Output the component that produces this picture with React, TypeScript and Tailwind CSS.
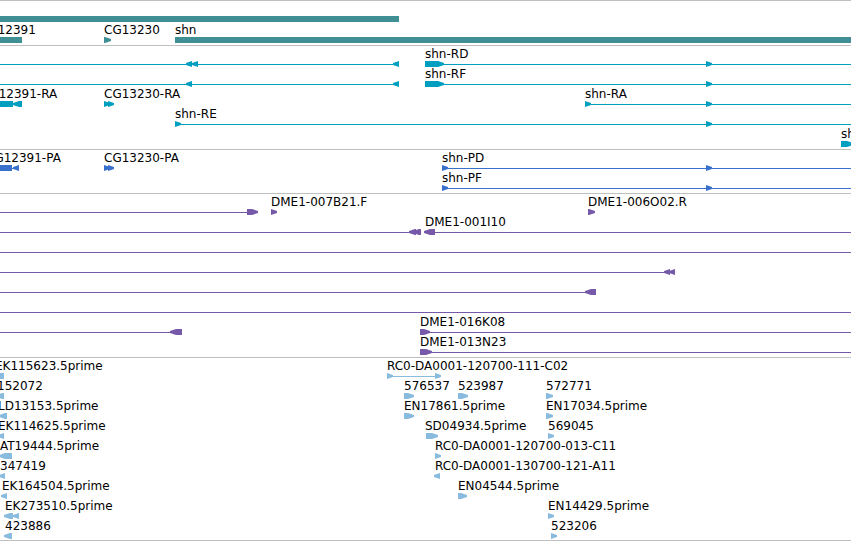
import React from 'react';

type Shape = 'line' | 'box' | 'right' | 'left';

// [shape, start, end], where a missing end runs on to the edge of the view
type Glyph = [Shape, number, number?];

interface Label {
  x: number;
  text: string;
}

interface Row {
  labels?: Label[];
  glyphs: Glyph[];
}

interface TrackData {
  name: string;
  color: string;
  rowHeight: string;
  padding: string;
  rows: Row[];
}

const GLYPH_HEIGHT = 6;
const TIP = 6;

const tracks: TrackData[] = [
  {
    name: 'Genes',
    color: 'text-[#3f8f94]',
    rowHeight: 'h-[21px]',
    padding: 'pt-0.5',
    rows: [
      { glyphs: [['box', -5, 399]] },
      {
        labels: [
          { x: -20, text: 'CG12391' },
          { x: 104, text: 'CG13230' },
          { x: 175, text: 'shn' },
        ],
        glyphs: [['box', -5, 22], ['right', 104, 111], ['box', 175]],
      },
    ],
  },
  {
    name: 'Transcripts',
    color: 'text-[#009fc0]',
    rowHeight: 'h-5',
    padding: 'pt-0.5 pb-px',
    rows: [
      {
        labels: [{ x: 425, text: 'shn-RD' }],
        glyphs: [
          ['line', 0, 399], ['left', 186, 192], ['left', 192, 198], ['left', 393, 399],
          ['line', 425], ['right', 425, 444], ['right', 706, 712],
        ],
      },
      {
        labels: [{ x: 425, text: 'shn-RF' }],
        glyphs: [
          ['line', 0, 399], ['left', 186, 192], ['left', 393, 399],
          ['line', 425], ['right', 425, 444], ['right', 706, 712],
        ],
      },
      {
        labels: [
          { x: -19, text: 'CG12391-RA' },
          { x: 104, text: 'CG13230-RA' },
          { x: 585, text: 'shn-RA' },
        ],
        glyphs: [
          ['box', -5, 13], ['left', 13, 22],
          ['right', 104, 110], ['right', 108, 114],
          ['line', 585], ['right', 585, 591], ['right', 706, 712],
        ],
      },
      {
        labels: [{ x: 175, text: 'shn-RE' }],
        glyphs: [['line', 175], ['right', 175, 181], ['right', 706, 712]],
      },
      {
        labels: [{ x: 841, text: 'shn-RB' }],
        glyphs: [['right', 841, 853]],
      },
    ],
  },
  {
    name: 'Proteins',
    color: 'text-[#3870cc]',
    rowHeight: 'h-5',
    padding: 'pt-0.5 pb-px',
    rows: [
      {
        labels: [
          { x: -14, text: 'CG12391-PA' },
          { x: 104, text: 'CG13230-PA' },
          { x: 442, text: 'shn-PD' },
        ],
        glyphs: [
          ['box', -5, 12], ['line', 12, 19], ['left', 13, 19],
          ['right', 104, 110], ['right', 108, 114],
          ['line', 442], ['right', 442, 448], ['right', 706, 712],
        ],
      },
      {
        labels: [{ x: 442, text: 'shn-PF' }],
        glyphs: [['line', 442], ['right', 442, 448], ['right', 706, 712]],
      },
    ],
  },
  {
    name: 'Clones',
    color: 'text-[#7659a8]',
    rowHeight: 'h-5',
    padding: 'pt-0.5 pb-px',
    rows: [
      {
        labels: [
          { x: 271, text: 'DME1-007B21.F' },
          { x: 588, text: 'DME1-006O02.R' },
        ],
        glyphs: [['line', 0, 257], ['right', 247, 258], ['right', 271, 277], ['right', 588, 595]],
      },
      {
        labels: [{ x: 425, text: 'DME1-001I10' }],
        glyphs: [['line', 0, 421], ['left', 409, 416], ['left', 413, 421], ['line', 425], ['left', 424, 435]],
      },
      { glyphs: [['line', 0]] },
      { glyphs: [['line', 0, 675], ['left', 664, 670], ['left', 669, 675]] },
      { glyphs: [['line', 0, 596], ['left', 585, 596]] },
      { glyphs: [['line', 0]] },
      {
        labels: [{ x: 420, text: 'DME1-016K08' }],
        glyphs: [['line', 0, 182], ['left', 170, 182], ['line', 420], ['right', 420, 430]],
      },
      {
        labels: [{ x: 420, text: 'DME1-013N23' }],
        glyphs: [['line', 420], ['right', 420, 432]],
      },
    ],
  },
  {
    name: 'ESTs',
    color: 'text-[#88bbdd]',
    rowHeight: 'h-5',
    padding: 'pt-0.5',
    rows: [
      {
        labels: [
          { x: -5, text: 'EK115623.5prime' },
          { x: 387, text: 'RC0-DA0001-120700-111-C02' },
        ],
        glyphs: [['box', -5, 4], ['line', 387, 440], ['right', 387, 393], ['right', 435, 441]],
      },
      {
        labels: [
          { x: -3, text: '152072' },
          { x: 404, text: '576537' },
          { x: 458, text: '523987' },
          { x: 546, text: '572771' },
        ],
        glyphs: [['left', -4, 4], ['right', 404, 414], ['right', 458, 468], ['right', 546, 553]],
      },
      {
        labels: [
          { x: -2, text: 'LD13153.5prime' },
          { x: 404, text: 'EN17861.5prime' },
          { x: 546, text: 'EN17034.5prime' },
        ],
        glyphs: [['left', -1, 7], ['right', 404, 414], ['right', 546, 553]],
      },
      {
        labels: [
          { x: -2, text: 'EK114625.5prime' },
          { x: 425, text: 'SD04934.5prime' },
          { x: 548, text: '569045' },
        ],
        glyphs: [['left', -2, 4], ['right', 426, 438], ['right', 548, 554]],
      },
      {
        labels: [
          { x: 0, text: 'AT19444.5prime' },
          { x: 435, text: 'RC0-DA0001-120700-013-C11' },
        ],
        glyphs: [['left', -1, 12], ['right', 435, 441]],
      },
      {
        labels: [
          { x: 0, text: '347419' },
          { x: 435, text: 'RC0-DA0001-130700-121-A11' },
        ],
        glyphs: [['left', -1, 5], ['left', 434, 440]],
      },
      {
        labels: [
          { x: 2, text: 'EK164504.5prime' },
          { x: 458, text: 'EN04544.5prime' },
        ],
        glyphs: [['left', 1, 7], ['right', 458, 467]],
      },
      {
        labels: [
          { x: 5, text: 'EK273510.5prime' },
          { x: 548, text: 'EN14429.5prime' },
        ],
        glyphs: [['left', 4, 13], ['left', 13, 19], ['right', 548, 554]],
      },
      {
        labels: [
          { x: 5, text: '423886' },
          { x: 551, text: '523206' },
        ],
        glyphs: [['left', 4, 12], ['right', 551, 557]],
      },
    ],
  },
];

const FeatureGlyph: React.FC<{ glyph: Glyph }> = ({ glyph }) => {
  const [shape, start, end] = glyph;
  const width = end === undefined ? '100%' : end - start;
  const mid = GLYPH_HEIGHT / 2;

  if (shape === 'line') {
    return <rect x={start} y={mid} width={width} height={1} />;
  }
  if (shape === 'box' || end === undefined) {
    return <rect x={start} y={0} width={width} height={GLYPH_HEIGHT} />;
  }

  // The blunt side sits at `back`, the slightly flattened point at `tip`
  const back = shape === 'right' ? start : end;
  const tip = shape === 'right' ? end : start;
  const neck = shape === 'right' ? tip - TIP : tip + TIP;
  const points = [
    [back, 0],
    [neck, 0],
    [tip, mid - 1],
    [tip, mid + 1],
    [neck, GLYPH_HEIGHT],
    [back, GLYPH_HEIGHT],
  ];
  return <polygon points={points.join(' ')} />;
};

const FeatureRow: React.FC<{ row: Row; height: string }> = ({ row, height }) => (
  <div className={`relative flex flex-col ${height}`}>
    {/* Labels are placed by sequence position */}
    <div className="h-[13px]">
      {(row.labels || []).map((label) => (
        <span
          key={label.text}
          className="absolute top-0 whitespace-nowrap text-black"
          style={{ left: label.x }}
        >
          {label.text}
        </span>
      ))}
    </div>
    <svg className="block w-full h-1.5 fill-current" aria-hidden="true">
      {row.glyphs.map((glyph, i) => (
        <FeatureGlyph key={i} glyph={glyph} />
      ))}
    </svg>
  </div>
);

const Track: React.FC<{ track: TrackData }> = ({ track }) => (
  <section
    aria-label={track.name}
    className={`border-b border-[#c0c0c0] ${track.padding} ${track.color}`}
  >
    {track.rows.map((row, i) => (
      <FeatureRow key={i} row={row} height={track.rowHeight} />
    ))}
  </section>
);

export default function App() {
  return (
    <main className="w-full overflow-hidden bg-white border-t border-[#c0c0c0] font-['DejaVu_Sans',sans-serif] text-[12px] leading-[13px]">
      {tracks.map((track) => (
        <Track key={track.name} track={track} />
      ))}
    </main>
  );
}
